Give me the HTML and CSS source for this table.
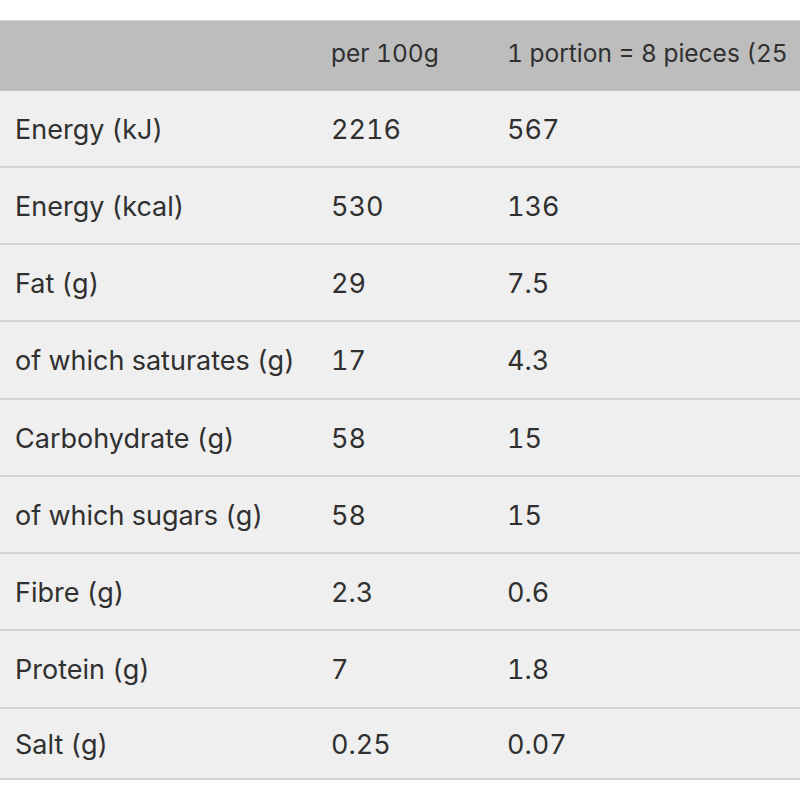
FILE: index.html
```html
<!DOCTYPE html>
<html>
<head>
<meta charset="utf-8">
<link rel="stylesheet" href="styles.css">
</head>
<body>
<div class="wrap">
<table class="nutrition">
  <thead>
    <tr><th class="c1"></th><th class="c2">per 100g</th><th class="c3">1 portion = 8 pieces (25</th></tr>
  </thead>
  <tbody>
    <tr><td>Energy (kJ)</td><td>2216</td><td>567</td></tr>
    <tr><td>Energy (kcal)</td><td>530</td><td>136</td></tr>
    <tr><td>Fat (g)</td><td>29</td><td>7.5</td></tr>
    <tr><td>of which saturates (g)</td><td>17</td><td>4.3</td></tr>
    <tr><td>Carbohydrate (g)</td><td>58</td><td>15</td></tr>
    <tr><td>of which sugars (g)</td><td>58</td><td>15</td></tr>
    <tr><td>Fibre (g)</td><td>2.3</td><td>0.6</td></tr>
    <tr><td>Protein (g)</td><td>7</td><td>1.8</td></tr>
    <tr class="last"><td>Salt (g)</td><td>0.25</td><td>0.07</td></tr>
  </tbody>
</table>
</div>
</body>
</html>
```
FILE: styles.css
```css
html, body { margin: 0; padding: 0; background: #fff; }
body { font-family: Inter, "Noto Sans", sans-serif; color: #303030; }
.wrap { padding-top: 20px; width: 800px; overflow: hidden; }
.nutrition { width: 800px; border-collapse: collapse; table-layout: fixed; }
.nutrition th, .nutrition td { text-align: left; font-weight: 400; white-space: nowrap; overflow: hidden; padding: 0; vertical-align: middle; font-variant-numeric: tabular-nums; }
.nutrition th { background: #bdbdbd; height: 63.5px; padding-bottom: 6px; border-top: 1px solid #d8d8d8; color: #303030; font-size: 24.5px; }
.nutrition td { background: #efefef; height: 73.25px; padding-top: 2px; border-bottom: 2px solid #d4d4d4; font-size: 27px; }
.nutrition .last td { height: 67px; }
.nutrition td:first-child, .nutrition th:first-child { padding-left: 15px; width: 316px; }
.nutrition tr > :nth-child(2) { width: 176px; }
```
